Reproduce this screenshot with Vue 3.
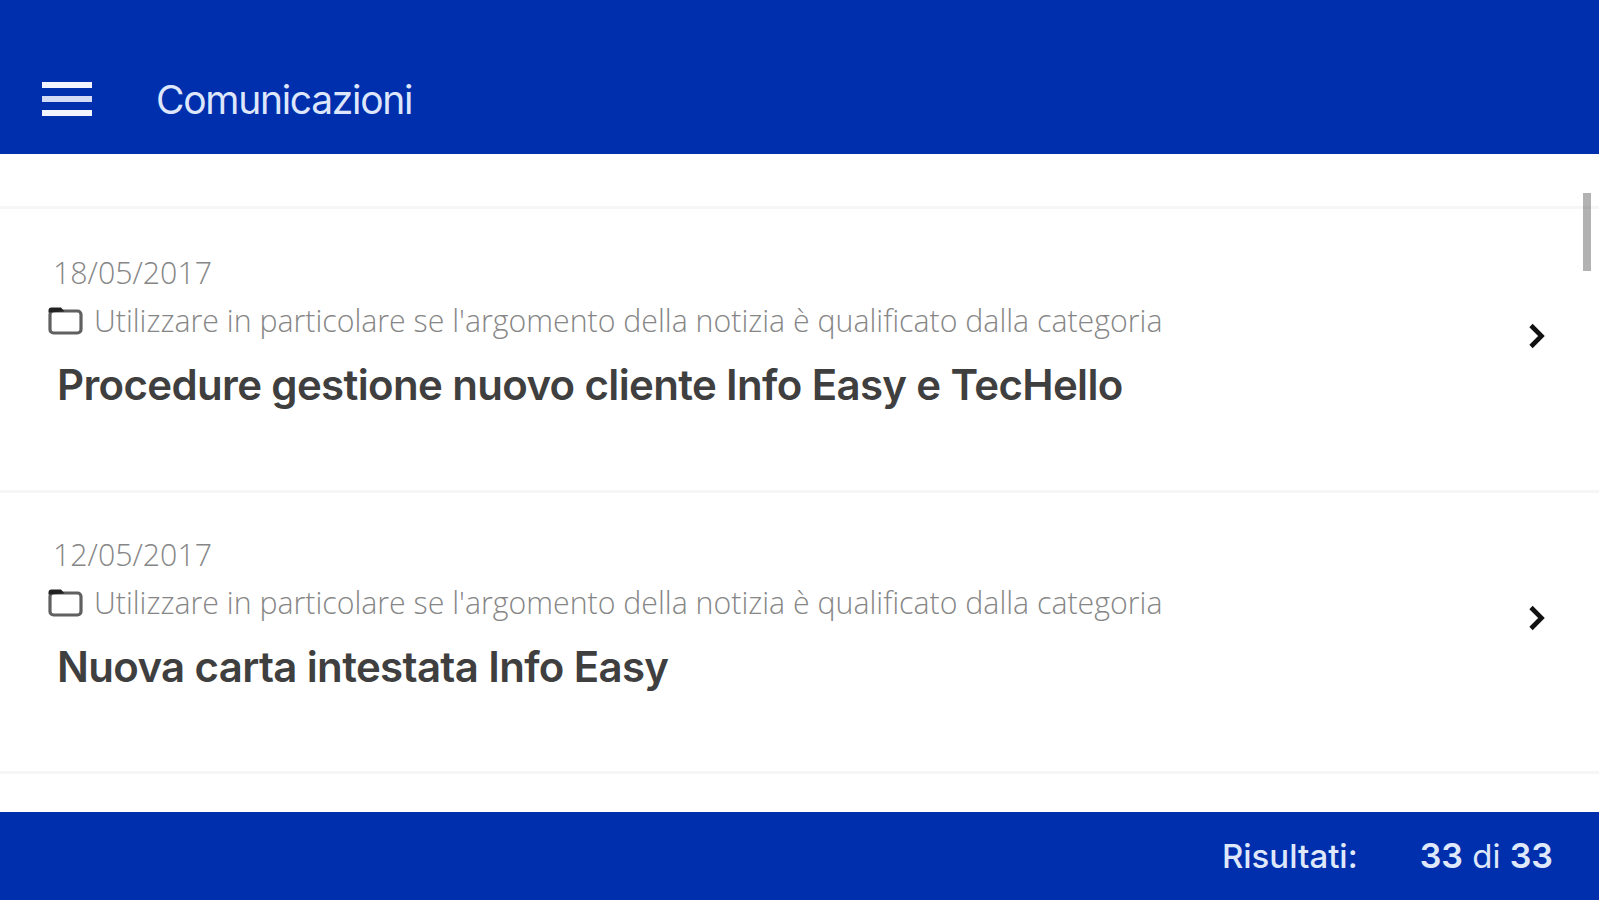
<script setup>
import { ref } from "vue";

const title = "Comunicazioni";
const total = 33;

const news = ref([
    {
        id: 1,
        date: "18/05/2017",
        category: "Utilizzare in particolare se l'argomento della notizia è qualificato dalla categoria",
        title: "Procedure gestione nuovo cliente Info Easy e TecHello",
    },
    {
        id: 2,
        date: "12/05/2017",
        category: "Utilizzare in particolare se l'argomento della notizia è qualificato dalla categoria",
        title: "Nuova carta intestata Info Easy",
    },
]);
</script>

<template>
    <div class="page">
        <header class="header">
            <button class="menu" aria-label="Menu">
                <span></span>
                <span></span>
                <span></span>
            </button>
            <h1>{{ title }}</h1>
        </header>

        <main class="list">
            <article v-for="item in news" :key="item.id" class="item">
                <div class="text">
                    <div class="date">{{ item.date }}</div>
                    <div class="category">
                        <svg class="folder" viewBox="0 0 36 30">
                            <rect x="2" y="5" width="31" height="22" rx="3.5" fill="none" stroke="#606060" stroke-width="3.2" />
                            <path d="M.5 6.500V4.500a3 3 0 0 1 3-3H13l3.500 4z" fill="#222" />
                        </svg>
                        <span>{{ item.category }}</span>
                    </div>
                    <h2>{{ item.title }}</h2>
                </div>
                <svg class="chevron" viewBox="0 0 18 26">
                    <path d="M3 2.500L13.500 13L3 23.500" fill="none" stroke="#111" stroke-width="4.600" />
                </svg>
            </article>
            <div class="scrollbar"></div>
        </main>

        <footer class="footer">
            <span class="label">Risultati:</span>
            <span class="count"><b>{{ total }}</b> di <b>{{ total }}</b></span>
        </footer>
    </div>
</template>

<style>
body {
    margin: 0;
    overflow: hidden;
}
</style>

<style scoped>
.page {
    display: grid;
    grid-template-rows: 154px 1fr 88px;
    height: 100vh;
    background: #fff;
    font-family: Inter, "Liberation Sans", sans-serif;
}

.header {
    display: flex;
    align-items: flex-start;
    box-sizing: border-box;
    padding: 76px 42px 0;
    background: #002fae;
    color: #dde6fa;

    h1 {
        margin: 0 0 0 64px;
        font-size: 39px;
        line-height: 48px;
        font-weight: 400;
        letter-spacing: -1.3px;
        white-space: nowrap;
    }
}

.menu {
    display: flex;
    flex-direction: column;
    gap: 8px;
    width: 50px;
    margin: 6px 0 0;
    padding: 0;
    border: 0;
    background: none;

    span {
        height: 6px;
        background: #f2f5ff;

        &:nth-child(2) {
            background: #d3dbf4;
        }
    }
}

.list {
    position: relative;
    overflow: hidden;
    padding-top: 52px;
}

.item {
    display: flex;
    justify-content: space-between;
    box-sizing: border-box;
    height: 284px;
    padding: 44px 53px 0 48px;
    border-top: 3px solid #f6f6f6;

    &:nth-last-child(2) {
        height: 284px;
        padding-top: 42px;
        border-bottom: 3px solid #f6f6f6;
    }

    h2 {
        margin: 10px 0 0 9px;
        color: #3f3f3f;
        font-size: 42px;
        line-height: 52px;
        font-weight: 600;
        letter-spacing: -0.65px;
        white-space: nowrap;
    }
}

.date,
.category {
    color: #868686;
    font-family: "Open Sans", sans-serif;
    font-size: 30.3px;
    font-weight: 300;
    white-space: nowrap;
}

.date {
    margin-left: 5px;
    line-height: 39px;
}

.category {
    display: flex;
    align-items: center;
    height: 57px;
}

.folder {
    width: 36px;
    height: 30px;
    margin-right: 10px;
}

.chevron {
    width: 18px;
    height: 26px;
    margin-top: 70px;
}

.scrollbar {
    position: absolute;
    top: 39px;
    right: 8px;
    width: 8px;
    height: 78px;
    background: rgba(0, 0, 0, 0.3);
}

.footer {
    display: flex;
    justify-content: flex-end;
    padding: 22px 46px 0 0;
    background: #002fae;
    color: #dfe7fa;
    font-size: 33px;
    line-height: 44px;
    white-space: nowrap;
}

.label {
    margin-right: 62px;
    font-weight: 500;
}

.count b {
    font-size: 34px;
    font-weight: 600;
}
</style>
